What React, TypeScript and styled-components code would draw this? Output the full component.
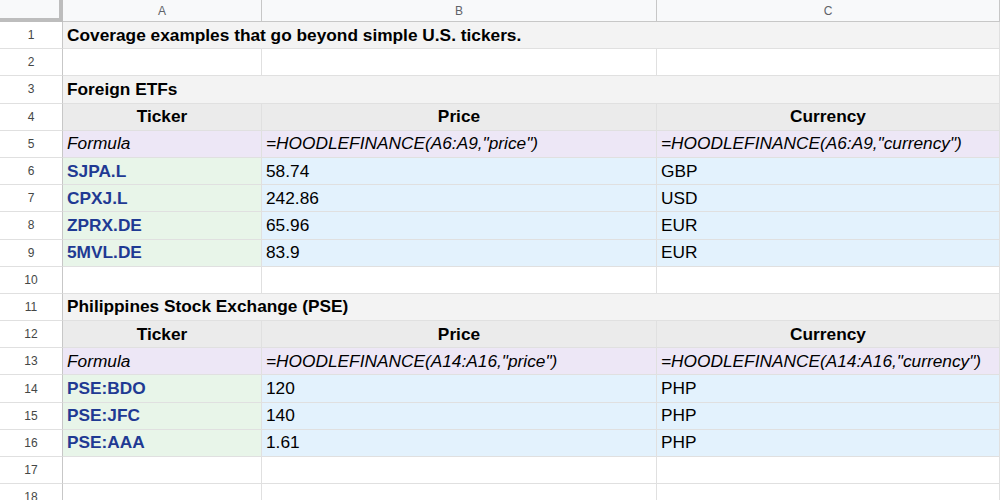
import React from "react";
import styled, { createGlobalStyle } from "styled-components";

const Global = createGlobalStyle`
  body { margin: 0; font-family: Arial, "Liberation Sans", sans-serif; background: #fff; overflow: hidden; }
`;

const Sheet = styled.div`
  display: grid;
  grid-template-columns: 63px 199px 395px 343px;
  grid-auto-rows: 27.2px;
  grid-template-rows: 22px;
`;

const ColHead = styled.div<{ $corner?: boolean }>`
  background: #f8f9fa;
  border-right: 1px solid #c7c7c7;
  border-bottom: ${p => (p.$corner ? "4px solid #bdbdbd" : "1px solid #c7c7c7")};
  ${p => (p.$corner ? "border-right: 4px solid #bdbdbd;" : "")}
  color: #5f6368;
  font-size: 12px;
  display: flex;
  align-items: center;
  justify-content: center;
  box-sizing: border-box;
`;

const RowHead = styled.div`
  background: #fff;
  border-right: 1px solid #c7c7c7;
  border-bottom: 1px solid #e0e0e0;
  color: #444746;
  font-size: 12px;
  display: flex;
  align-items: center;
  justify-content: center;
  box-sizing: border-box;
`;

const Cell = styled.div<{ $bg?: string; $span?: number; $bold?: boolean; $italic?: boolean; $center?: boolean; $color?: string }>`
  grid-column: span ${p => p.$span || 1};
  background: ${p => p.$bg || "#fff"};
  border-right: 1px solid #e0e0e0;
  border-bottom: 1px solid #e0e0e0;
  box-sizing: border-box;
  padding: 0 4px;
  display: flex;
  align-items: center;
  justify-content: ${p => (p.$center ? "center" : "flex-start")};
  font-size: 17.3px;
  font-weight: ${p => (p.$bold ? 700 : 400)};
  font-style: ${p => (p.$italic ? "italic" : "normal")};
  color: ${p => p.$color || "#000"};
  white-space: nowrap;
  overflow: hidden;
`;

const GRAY = "#f3f3f3";
const HEAD = "#ebebeb";
const PURPLE = "#ede7f6";
const GREEN = "#e8f5e9";
const BLUE = "#e3f2fd";
const TICK = "#1f3a93";

type Row = React.ReactNode;

function section(start: number, title: string, from: string, to: string, data: [string, string, string][]) {
  const rows: Row[] = [];
  rows.push(<React.Fragment key={`t${start}`}><RowHead>{start}</RowHead><Cell $span={3} $bg={GRAY} $bold>{title}</Cell></React.Fragment>);
  rows.push(<React.Fragment key={`h${start}`}><RowHead>{start + 1}</RowHead>
    <Cell $bg={HEAD} $bold $center>Ticker</Cell><Cell $bg={HEAD} $bold $center>Price</Cell><Cell $bg={HEAD} $bold $center>Currency</Cell></React.Fragment>);
  rows.push(<React.Fragment key={`f${start}`}><RowHead>{start + 2}</RowHead>
    <Cell $bg={PURPLE} $italic>Formula</Cell>
    <Cell $bg={PURPLE} $italic>=HOODLEFINANCE({from}:{to},"price")</Cell>
    <Cell $bg={PURPLE} $italic>=HOODLEFINANCE({from}:{to},"currency")</Cell></React.Fragment>);
  data.forEach((d, i) => rows.push(<React.Fragment key={`d${start}-${i}`}><RowHead>{start + 3 + i}</RowHead>
    <Cell $bg={GREEN} $bold $color={TICK}>{d[0]}</Cell><Cell $bg={BLUE}>{d[1]}</Cell><Cell $bg={BLUE}>{d[2]}</Cell></React.Fragment>));
  return rows;
}

const Empty = ({ n }: { n: number }) => (<><RowHead>{n}</RowHead><Cell /><Cell /><Cell /></>);

export default function App() {
  return (
    <>
      <Global />
      <Sheet>
        <ColHead $corner /><ColHead>A</ColHead><ColHead>B</ColHead><ColHead>C</ColHead>
        <RowHead>1</RowHead><Cell $span={3} $bg={GRAY} $bold>Coverage examples that go beyond simple U.S. tickers.</Cell>
        <Empty n={2} />
        {section(3, "Foreign ETFs", "A6", "A9", [["SJPA.L", "58.74", "GBP"], ["CPXJ.L", "242.86", "USD"], ["ZPRX.DE", "65.96", "EUR"], ["5MVL.DE", "83.9", "EUR"]])}
        <Empty n={10} />
        {section(11, "Philippines Stock Exchange (PSE)", "A14", "A16", [["PSE:BDO", "120", "PHP"], ["PSE:JFC", "140", "PHP"], ["PSE:AAA", "1.61", "PHP"]])}
        <Empty n={17} />
        <Empty n={18} />
      </Sheet>
    </>
  );
}
